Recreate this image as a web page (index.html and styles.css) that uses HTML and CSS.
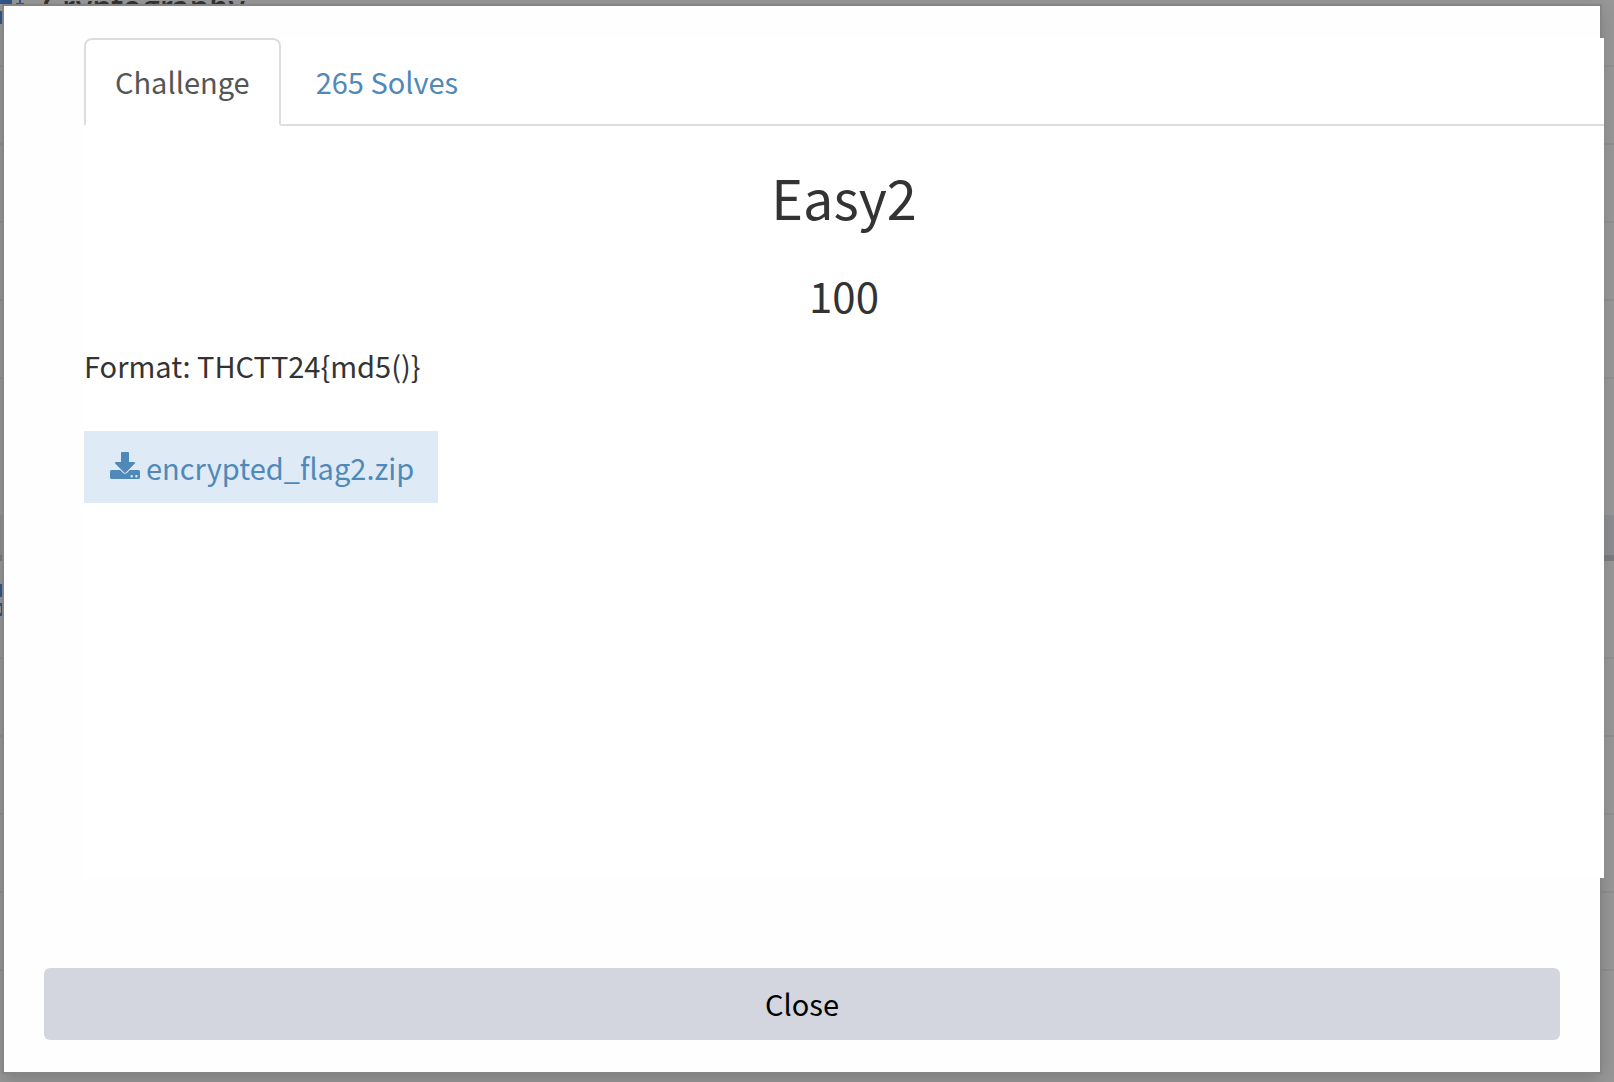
FILE: index.html
```html
<!DOCTYPE html>
<html lang="en">
<head>
<meta charset="utf-8">
<title>Easy2</title>
<meta name="viewport" content="width=device-width, initial-scale=1">
<link rel="stylesheet" href="styles.css">
</head>
<body>
<main class="board" aria-hidden="true">
  <section class="category">
    <h2 class="category-title"><svg class="category-icon" viewBox="0 0 24 32"><path d="M0 0H12V4H0ZM19 0H21V3H24V5H16V3H19ZM0 11H2V24H0Z"/></svg>Cryptography</h2>
    <div class="row"></div><div class="row"></div><div class="row"></div><div class="row"></div>
  </section>
  <div class="divider"></div>
  <section class="category">
    <div class="category-head"><svg class="category-icon" viewBox="0 0 24 32"><path d="M0 0H24V13H0ZM0 19H24V32H0V29H1V22H0Z"/></svg></div>
    <div class="row"></div><div class="row"></div><div class="row"></div><div class="row"></div>
  </section>
</main>
<div class="modal" role="dialog" aria-labelledby="challenge-name">
  <div class="panel">
    <nav class="tabs">
      <a class="tab tab-active" href="#challenge">Challenge</a>
      <a class="tab" href="#solves">265 Solves</a>
    </nav>
    <h1 class="name" id="challenge-name">Easy2</h1>
    <h2 class="points">100</h2>
    <p class="description">Format: THCTT24{md5()}</p>
    <a class="file" href="#encrypted_flag2.zip"><svg class="file-icon" viewBox="0 0 30 27"><path fill-rule="evenodd" d="M12 0h6q1 0 1 1v9h5q2 0 .8 1.600l-8.600 8.700q-1.200 1.200-2.400 0L5.200 11.600Q4 10 6 10h5V1q0-1 1-1ZM1.500 18h8.700l2.600 2.700q2.200 2 4.400 0L19.800 18h8.700q1.500 0 1.500 1.500v6q0 1.500-1.500 1.500h-27Q0 27 0 25.500v-6Q0 18 1.500 18ZM21.700 23a1.200 1.200 0 1 0 0 2.400 1.200 1.200 0 0 0 0-2.400Zm4.700 0a1.200 1.200 0 1 0 0 2.400 1.200 1.200 0 0 0 0-2.400Z"/></svg>encrypted_flag2.zip</a>
  </div>
  <button class="close" type="button">Close</button>
</div>
</body>
</html>
```
FILE: styles.css
```css
* { box-sizing: border-box; }
body {
  margin: 0;
  min-height: 100vh;
  background: #979797;
  color: #333;
  font-family: "Noto Sans CJK SC", "Noto Sans", sans-serif;
  font-size: 29px;
  line-height: 40px;
  overflow: hidden;
}
.board { height: 100vh; overflow: hidden; }
.category-title {
  display: flex;
  gap: 18px;
  height: 67px;
  margin: 0;
  border-bottom: 2px solid #8f8f8f;
  font-size: 31px;
  font-weight: 500;
  line-height: 10px;
}
.category-icon { width: 24px; height: 32px; fill: #2f5689; }
.row { height: 78px; border-bottom: 2px solid #8f8f8f; }
.divider {
  height: 46px;
  margin-top: 136px;
  background: #8c8d92;
  border-bottom: 6px solid #7b7c81;
}
.category-head {
  height: 98px;
  padding-top: 22px;
  border-bottom: 2px solid #8f8f8f;
}
.modal {
  position: absolute;
  top: 6px;
  left: 4px;
  right: 14px;
  padding: 32px 40px;
  background: #fefefe;
  box-shadow: 0 0 0 2px #858585, 0 6px 18px rgba(0, 0, 0, .2);
}
.panel {
  min-height: 840px;
  margin: 0 -44px 90px 40px;
  background: #fff;
}
.tabs {
  display: flex;
  gap: 4px;
  border-bottom: 2px solid #ddd;
}
.tab {
  margin-bottom: -2px;
  padding: 21px 29px 23px;
  border: 2px solid transparent;
  border-radius: 8px 8px 0 0;
  color: #5089b8;
  text-decoration: none;
}
.tab-active {
  border-color: #ddd #ddd #fff;
  background: #fff;
  color: #555;
}
.name, .points { margin: 0; font-weight: 400; text-align: center; }
.name { margin-top: 38px; font-size: 54px; line-height: 66px; }
.points { margin-top: 41px; font-size: 42px; line-height: 48px; }
.description { margin: 26px 0 46px; }
.file {
  display: inline-flex;
  gap: 6px;
  padding: 16px 24px 16px 26px;
  background: #deebf7;
  color: #5089b8;
  text-decoration: none;
}
.file-icon { width: 30px; height: 27px; margin-top: 5px; fill: #5089b8; }
.close {
  display: block;
  width: 100%;
  height: 72px;
  padding: 0 0 2px;
  border: 0;
  border-radius: 6px;
  background: #d3d6de;
  color: #000;
  font: inherit;
}
```
